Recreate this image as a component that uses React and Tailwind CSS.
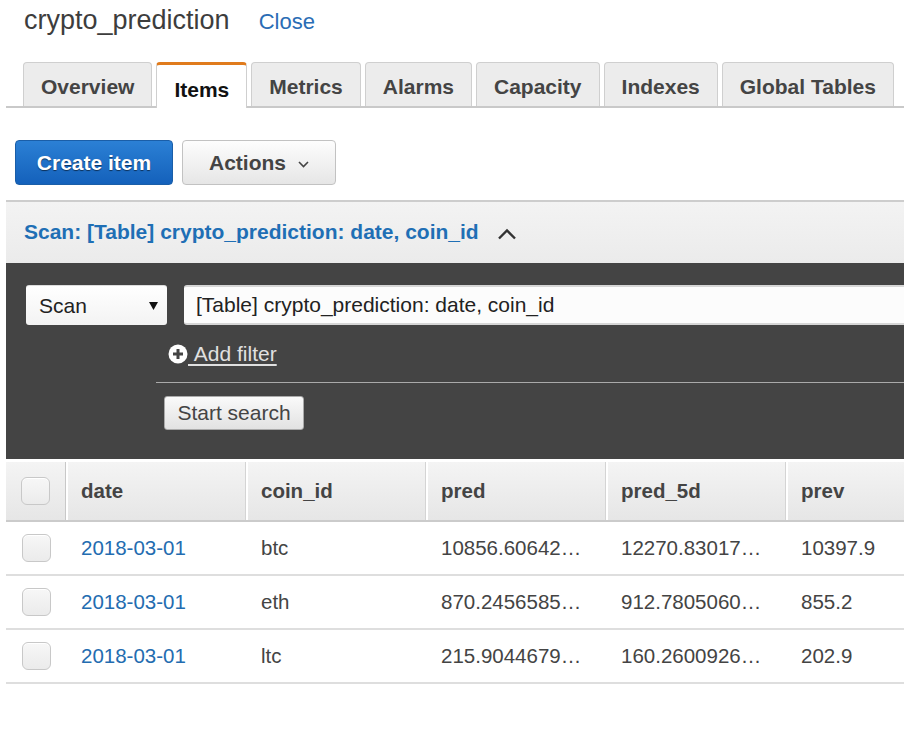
import React from "react";

const tabs = ["Overview", "Items", "Metrics", "Alarms", "Capacity", "Indexes", "Global Tables"];

const columns = ["date", "coin_id", "pred", "pred_5d", "prev"];

const rows = [
  ["2018-03-01", "btc", "10856.606424331665", "12270.830171585083", "10397.9"],
  ["2018-03-01", "eth", "870.2456585168839", "912.7805060148239", "855.2"],
  ["2018-03-01", "ltc", "215.90446796417236", "160.26009264588356", "202.9"],
];

function Checkbox() {
  return (
    <div className="h-[28px] w-[29px] rounded-[6px] border border-[#c8c8c8] bg-gradient-to-b from-[#f7f7f7] to-[#ebebeb] shadow-[inset_0_1px_0_#fff]" />
  );
}

export default function App() {
  return (
    <div className="h-[752px] w-[904px] overflow-hidden bg-white font-['Liberation_Sans',Arial,sans-serif] text-[21px] text-[#444]">
      <div className="w-[1000px] pl-[6px]">
        {/* title */}
        <div className="flex items-baseline pl-[18px] pt-[4px]">
          <span className="text-[27px] leading-[32px] text-[#3d3d3d]">crypto_prediction</span>
          <span className="ml-[29px] text-[22px] leading-[32px] text-[#2a6db5]">Close</span>
        </div>

        {/* tabs */}
        <div className="mt-[24px] flex items-end gap-[4px] border-b-2 border-[#c9c9c9] pl-[17px]">
          {tabs.map((t) =>
            t === "Items" ? (
              <div
                key={t}
                className="-mb-[2px] h-[46px] rounded-t-[4px] border-x border-t-[3px] border-x-[#cfcfcf] border-t-[#e07b1c] bg-white px-[17px] pt-[13px] font-bold leading-[24px] text-[#111]"
              >
                {t}
              </div>
            ) : (
              <div
                key={t}
                className="h-[44px] rounded-t-[4px] border-x border-t border-[#cfcfcf] bg-[#ececec] px-[17px] pt-[12px] font-bold leading-[24px] text-[#444]"
              >
                {t}
              </div>
            )
          )}
        </div>

        {/* action buttons */}
        <div className="mt-[32px] flex gap-[9px] pl-[9px]">
          <button className="h-[45px] w-[158px] rounded-[4px] border border-[#1a5ea8] bg-gradient-to-b from-[#2b80d5] to-[#1461bb] font-bold text-white [text-shadow:0_1px_1px_rgba(0,0,0,0.55)]">
            Create item
          </button>
          <button className="flex h-[45px] w-[154px] items-center justify-center gap-[12px] rounded-[4px] border border-[#c2c2c2] bg-gradient-to-b from-[#fdfdfd] to-[#e6e6e6] font-bold text-[#444]">
            Actions
            <svg width="11" height="7" viewBox="0 0 11 7" className="mt-[4px]">
              <path d="M1 1l4.5 4.5L10 1" fill="none" stroke="#444" strokeWidth="1.6" />
            </svg>
          </button>
        </div>

        {/* scan header */}
        <div className="mt-[15px] flex h-[63px] items-center border-t-2 border-[#cdcdcd] bg-gradient-to-b from-[#f3f3f3] to-[#ebebeb] pb-[2px] pl-[18px]">
          <span className="font-bold text-[#1f6fb5]">Scan: [Table] crypto_prediction: date, coin_id</span>
          <svg width="20" height="12" viewBox="0 0 20 12" className="ml-[18px] mt-[4px]">
            <path d="M2 10.5l8-8 8 8" fill="none" stroke="#333" strokeWidth="2.4" />
          </svg>
        </div>

        {/* scan panel */}
        <div className="h-[196px] bg-[#444] pt-[22px]">
          <div className="flex gap-[17px] pl-[20px]">
            <div className="flex h-[40px] w-[141px] items-center justify-between rounded-[3px] border-t border-[#ddd] bg-gradient-to-b from-white to-[#f3f3f3] pl-[13px] pr-[9px] text-[#222]">
              Scan
              <svg width="9" height="8" viewBox="0 0 9 8">
                <path d="M0 0h9L4.5 8z" fill="#111" />
              </svg>
            </div>
            <div className="flex h-[40px] flex-1 items-center rounded-l-[3px] border-y-2 border-[#d6d6d6] bg-[#fcfcfc] pl-[12px] text-[#222]">
              [Table] crypto_prediction: date, coin_id
            </div>
          </div>
          <div className="ml-[150px]">
            <div className="flex h-[57px] items-center pl-[12px]">
              <svg width="20" height="20" viewBox="0 0 20 20">
                <circle cx="10" cy="10" r="9.5" fill="#fff" />
                <path d="M10 5v10M5 10h10" stroke="#444" strokeWidth="3" />
              </svg>
              <span className="text-[#e0e0e0] underline underline-offset-[3px]">&nbsp;Add filter</span>
            </div>
            <div className="h-px bg-[#aaa]" />
            <div className="pl-[8px] pt-[13px]">
              <button className="h-[34px] w-[140px] rounded-[3px] border border-[#aaa] bg-gradient-to-b from-[#fafafa] to-[#e2e2e2] text-[#444]">
                Start search
              </button>
            </div>
          </div>
        </div>

        {/* table */}
        <div className="mt-[3px] text-[20.5px]">
          <div className="grid h-[60px] grid-cols-[60px_180px_180px_180px_180px_180px] border-b-2 border-[#cbcbcb] bg-gradient-to-b from-[#f4f4f4] to-[#e6e6e6]">
            <div className="flex items-center justify-center border-r border-[#c8c8c8]">
              <Checkbox />
            </div>
            {columns.map((c) => (
              <div
                key={c}
                className="flex items-center border-l-2 border-r border-l-white border-r-[#d4d4d4] pl-[13px] font-bold text-[#444]"
              >
                {c}
              </div>
            ))}
          </div>
          {rows.map((r, i) => (
            <div
              key={i}
              className="grid h-[54px] grid-cols-[60px_180px_180px_180px_180px_180px] border-b-2 border-[#dedede]"
            >
              <div className="flex items-center justify-center">
                <Checkbox />
              </div>
              {r.map((v, j) => (
                <div
                  key={j}
                  className={`flex min-w-0 items-center overflow-hidden px-[15px] ${j === 0 ? "text-[#236cb0]" : "text-[#444]"}`}
                >
                  <span className="truncate">{v}</span>
                </div>
              ))}
            </div>
          ))}
        </div>
      </div>
    </div>
  );
}
